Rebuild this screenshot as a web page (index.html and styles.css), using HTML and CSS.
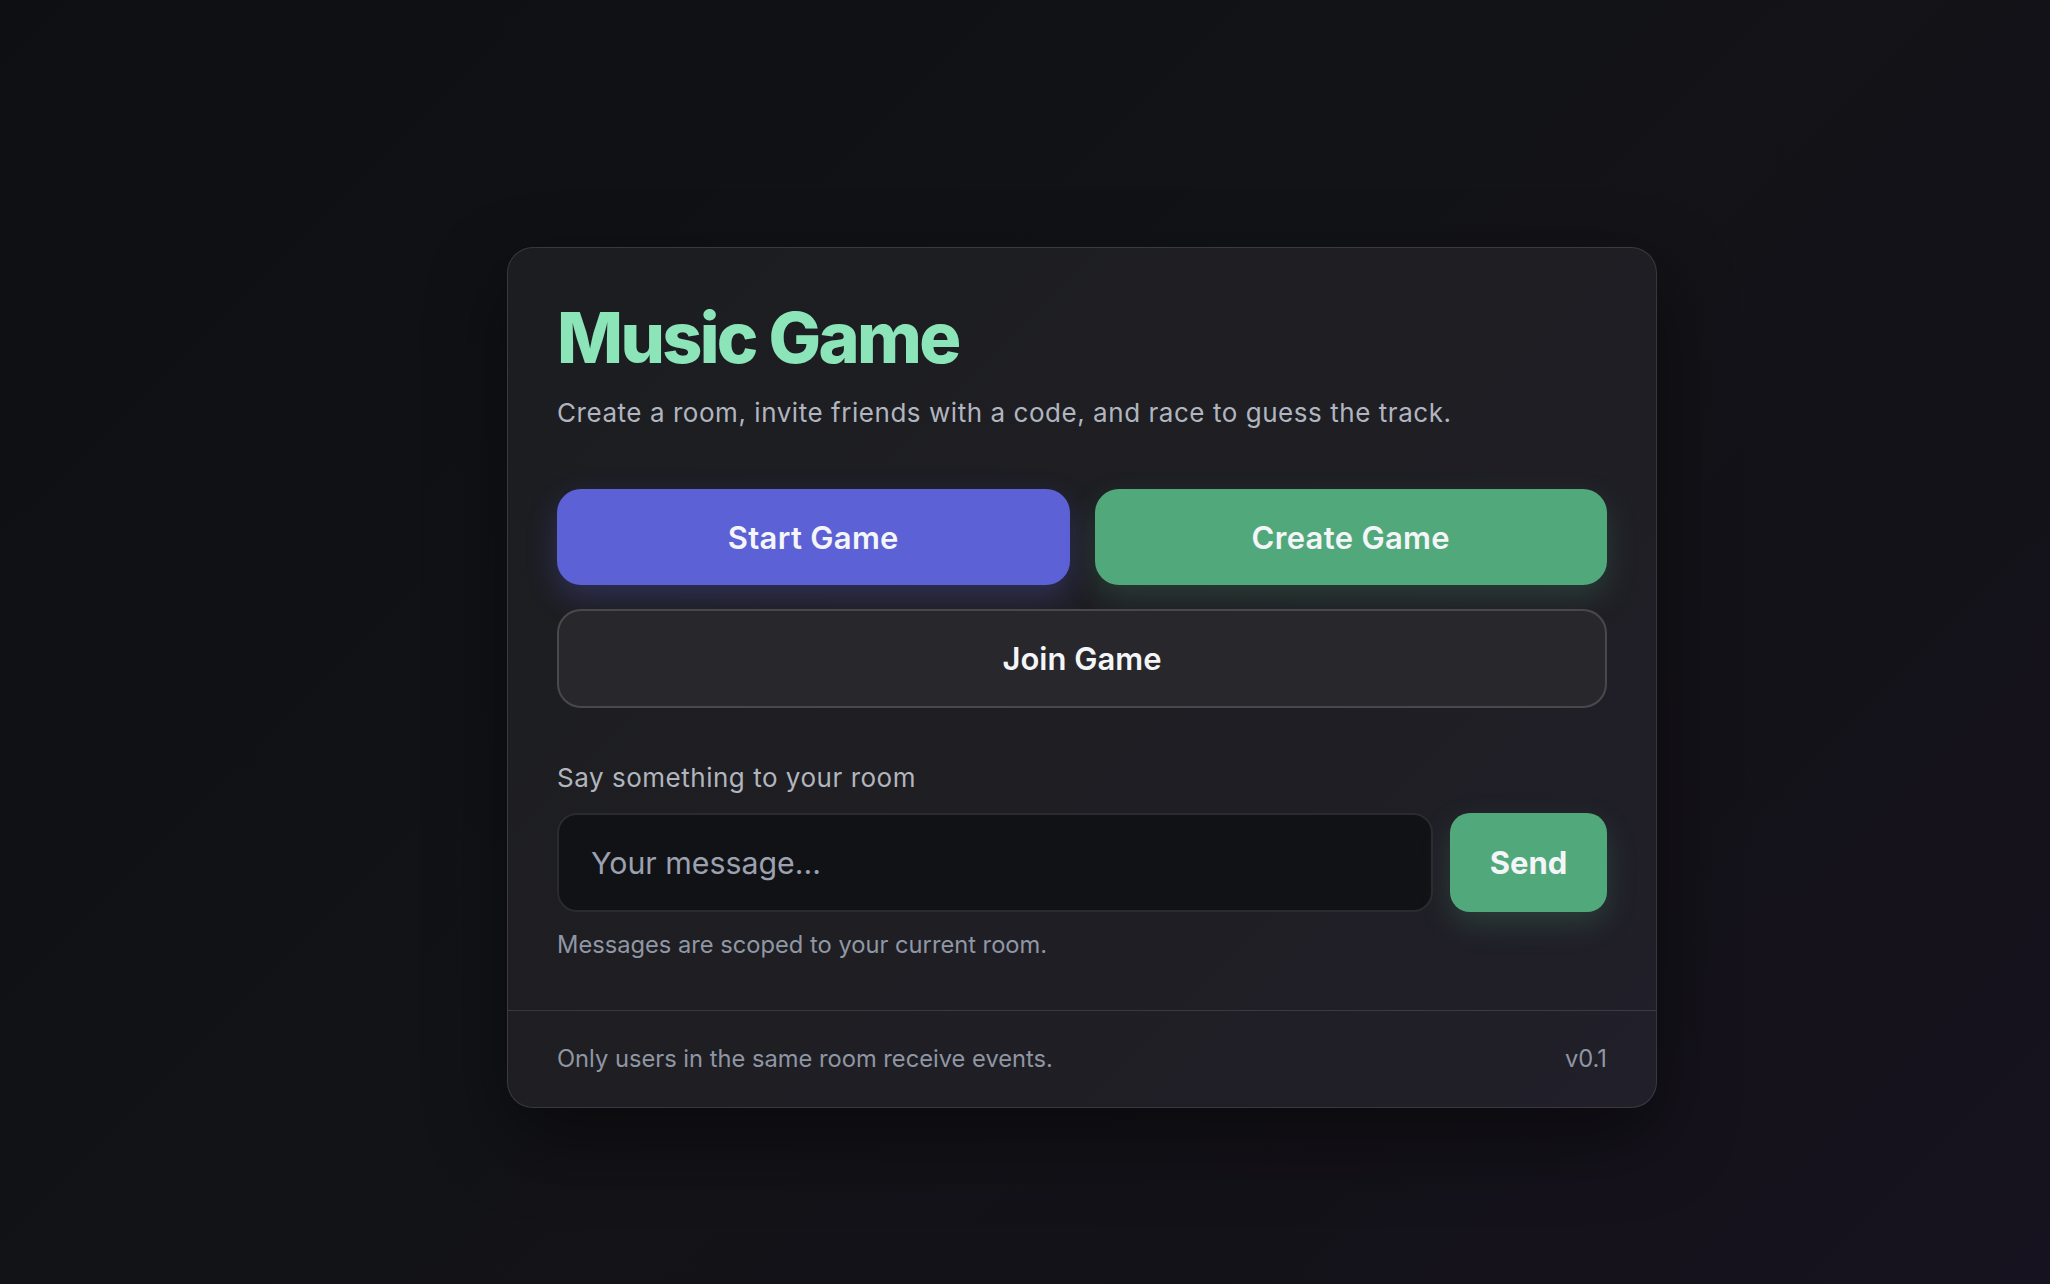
FILE: index.html
```html
<!DOCTYPE html>
<html lang="en">
<head>
<meta charset="utf-8">
<title>Music Game</title>
<link rel="stylesheet" href="styles.css">
</head>
<body>
<div class="page">
  <section class="card">
    <div class="card-main">
      <h1 class="title">Music Game</h1>
      <p class="subtitle">Create a room, invite friends with a code, and race to guess the track.</p>

      <div class="actions">
        <button class="btn btn-primary" type="button">Start Game</button>
        <button class="btn btn-success" type="button">Create Game</button>
        <button class="btn btn-ghost btn-wide" type="button">Join Game</button>
      </div>

      <label class="field-label" for="msg">Say something to your room</label>
      <div class="composer">
        <input id="msg" class="input" type="text" placeholder="Your message...">
        <button class="btn btn-success btn-send" type="button">Send</button>
      </div>
      <p class="hint">Messages are scoped to your current room.</p>
    </div>
    <footer class="card-footer">
      <span>Only users in the same room receive events.</span>
      <span>v0.1</span>
    </footer>
  </section>
</div>
</body>
</html>
```

FILE: styles.css
```css
* { box-sizing: border-box; }

html, body {
  margin: 0;
  height: 100%;
}

body {
  font-family: "Inter", "Noto Sans", "Liberation Sans", sans-serif;
  background: linear-gradient(135deg, #0d0f12 0%, #121317 45%, #141219 75%, #16121f 100%);
  color: #e8eaee;
  overflow: hidden;
}

.page {
  min-height: 100vh;
  padding: 247px 0 0 507px;
}

.card {
  width: 1150px;
  border: 1px solid rgba(255, 255, 255, 0.12);
  border-radius: 26px;
  background: linear-gradient(135deg, #1c1d21 0%, #1e1e23 50%, #211f29 100%);
  box-shadow: 0 30px 80px rgba(0, 0, 0, 0.45);
  overflow: hidden;
}

.card-main {
  padding: 51px 49px 48px;
}

.title {
  margin: 0;
  font-size: 70px;
  line-height: 77px;
  font-weight: 800;
  letter-spacing: -0.038em;
  color: #8be5b8;
}

.subtitle {
  margin: 17px 0 0;
  font-size: 26px;
  line-height: 39px;
  letter-spacing: 0.021em;
  color: #b0b5bf;
}

.actions {
  margin-top: 57px;
  display: grid;
  grid-template-columns: 1fr 1fr;
  column-gap: 25px;
  row-gap: 24px;
}

.btn {
  font-family: inherit;
  font-size: 31px;
  font-weight: 600;
  letter-spacing: 0.01em;
  color: #f4f5f8;
  border: none;
  border-radius: 24px;
  height: 96px;
  cursor: pointer;
}

.btn-primary {
  background: #5c61d6;
  box-shadow: 0 12px 30px rgba(92, 97, 214, 0.28);
}

.btn-success {
  background: #51a97b;
  box-shadow: 0 12px 30px rgba(81, 169, 123, 0.22);
}

.btn-ghost {
  background: #27272c;
  border: 2px solid rgba(255, 255, 255, 0.16);
  height: 99px;
  letter-spacing: 0;
}

.btn-wide {
  grid-column: 1 / -1;
}

.field-label {
  display: block;
  margin-top: 50px;
  font-size: 26px;
  line-height: 39px;
  letter-spacing: 0.02em;
  color: #b1b5be;
}

.composer {
  margin-top: 16px;
  display: flex;
  gap: 17px;
}

.input {
  flex: 1;
  height: 99px;
  padding: 0 32px;
  font-family: inherit;
  font-size: 30.3px;
  color: #e8eaee;
  background: #111216;
  border: 2px solid #2a2b30;
  border-radius: 20px;
  outline: none;
}

.input::placeholder {
  color: #9ba1ae;
}

.btn-send {
  width: 157px;
  height: 99px;
  border-radius: 20px;
  font-weight: 700;
  letter-spacing: 0;
}

.hint {
  margin: 15px 0 0;
  font-size: 23.7px;
  line-height: 35px;
  color: #9097a4;
}

.card-footer {
  border-top: 1px solid rgba(255, 255, 255, 0.12);
  padding: 30px 49px 31px;
  display: flex;
  justify-content: space-between;
  font-size: 23.7px;
  line-height: 35px;
  color: #8f96a3;
}
```
